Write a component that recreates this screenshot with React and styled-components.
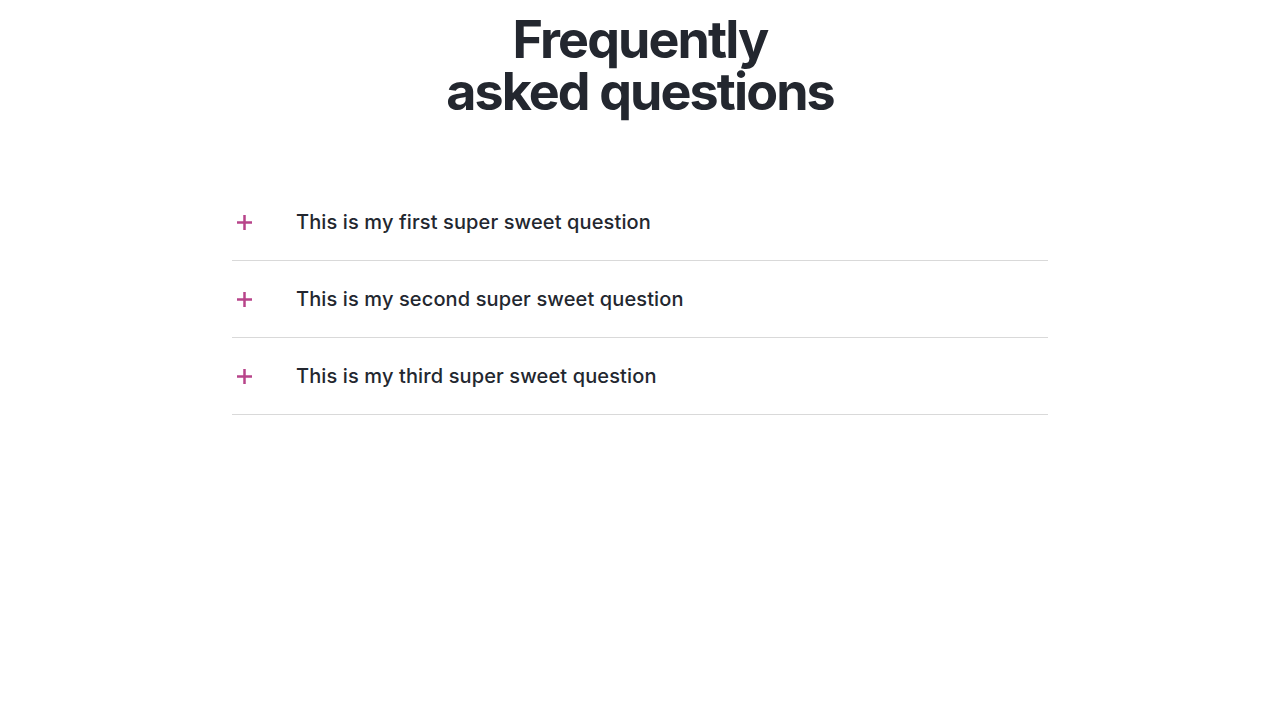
import styled, { createGlobalStyle } from "styled-components";

const GlobalStyle = createGlobalStyle`
  body {
    margin: 0;
    background: #ffffff;
    font-family: Inter, "Liberation Sans", sans-serif;
    color: #23272f;
  }
`;

const questions = [
  "This is my first super sweet question",
  "This is my second super sweet question",
  "This is my third super sweet question",
];

function PlusIcon() {
  return (
    <svg width="17" height="17" viewBox="0 0 17 17" fill="none">
      <path d="M8.5 1v15M1 8.5h15" stroke="#b8448a" strokeWidth="2.5" />
    </svg>
  );
}

export default function App() {
  return (
    <>
      <GlobalStyle />
      <Page>
        <Title>
          <TitleLine>Frequently</TitleLine>
          <TitleLine>asked questions</TitleLine>
        </Title>
        <List>
          {questions.map((q) => (
            <Item key={q}>
              <IconSlot>
                <PlusIcon />
              </IconSlot>
              <Question>{q}</Question>
            </Item>
          ))}
        </List>
      </Page>
    </>
  );
}

const Page = styled.main`
  width: 816px;
  margin: 0 auto;
  padding-top: 14px;
`;

const Title = styled.h1`
  margin: 0 0 66px;
  text-align: center;
  font-size: 52px;
  font-weight: 700;
  letter-spacing: -1.9px;
  color: #23272f;
`;

const TitleLine = styled.span`
  display: block;
  line-height: 52px;
`;

const List = styled.div`
  display: flex;
  flex-direction: column;
`;

const Item = styled.div`
  display: flex;
  align-items: center;
  height: 76px;
  border-bottom: 1px solid #d9d9d9;
  cursor: pointer;
`;

const IconSlot = styled.span`
  display: flex;
  width: 64px;
  padding-left: 4px;
  box-sizing: border-box;
`;

const Question = styled.span`
  font-size: 20px;
  font-weight: 500;
  color: #23272f;
  letter-spacing: 0.12px;
`;
